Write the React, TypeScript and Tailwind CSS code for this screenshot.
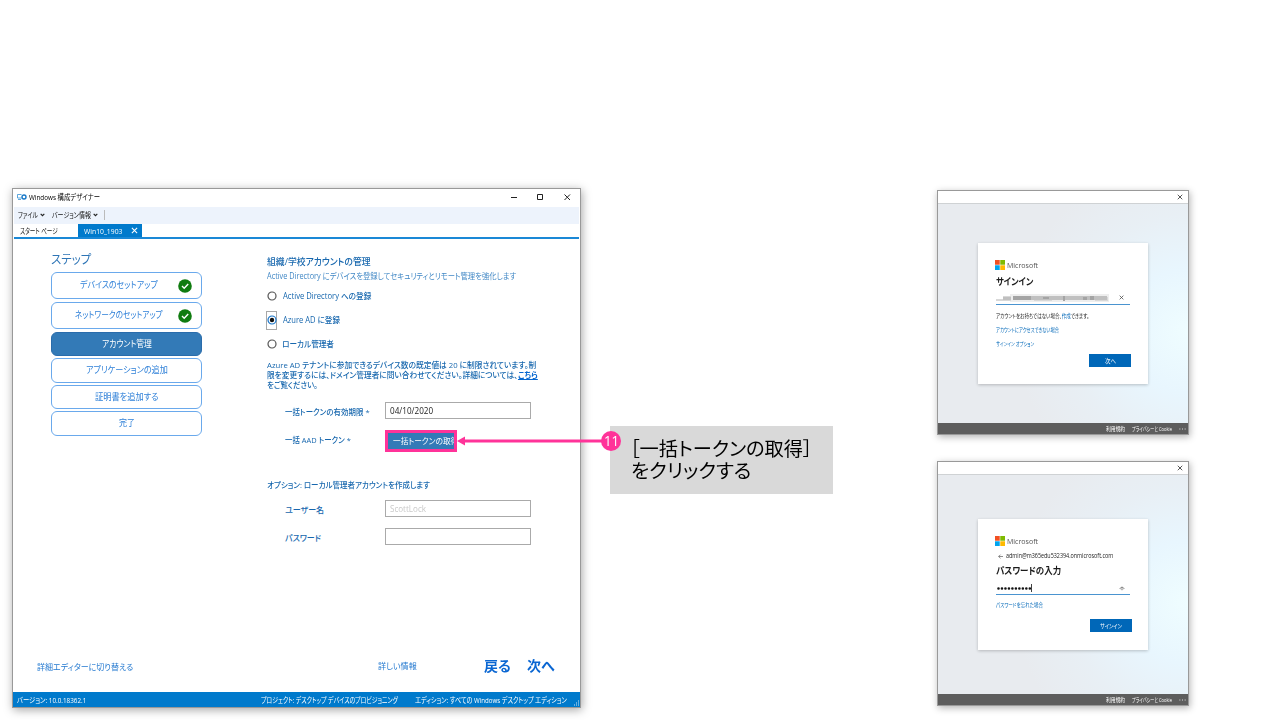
import { useLayoutEffect, useRef, useState } from "react";
import type { ReactNode } from "react";

type FitProps = { w: number; className?: string; children: ReactNode };

/* A single line of text, condensed or widened to a given width. */
function Fit({ w, className = "", children }: FitProps) {
  const ref = useRef<HTMLSpanElement>(null);
  const [scale, setScale] = useState(1);
  useLayoutEffect(() => {
    if (ref.current) setScale(w / ref.current.offsetWidth);
  }, [w]);
  return (
    <span className={`flex shrink-0 items-center ${className}`} style={{ width: w }}>
      <span
        ref={ref}
        className="inline-block shrink-0 origin-left whitespace-nowrap"
        style={{ transform: `scaleX(${scale})` }}
      >
        {children}
      </span>
    </span>
  );
}

function Check() {
  return (
    <svg viewBox="0 0 14 14" className="h-[14px] w-[14px]">
      <circle cx="7" cy="7" r="6.8" fill="#107c10" />
      <path d="M4 7.1 6.2 9.2 10.2 5" fill="none" stroke="#fff" strokeWidth="1.4" />
    </svg>
  );
}

function Cross({ className }: { className: string }) {
  return (
    <svg viewBox="0 0 8 8" className={className}>
      <path d="M1 1 7 7M7 1 1 7" fill="none" stroke="currentColor" strokeWidth="1.2" />
    </svg>
  );
}

function Caret() {
  return (
    <svg viewBox="0 0 6 4" className="h-[4px] w-[5px]">
      <path d="M.8 .6 3 2.8 5.2 .6" fill="none" stroke="#222" strokeWidth="1.4" />
    </svg>
  );
}

type StepProps = { label: string; w: number; size: string; done?: boolean; active?: boolean };

function Step({ label, w, size, done, active }: StepProps) {
  return (
    <div
      className={`flex w-[151px] items-center rounded-[6px] border ${size} ${
        active ? "border-[#2a6cab] bg-[#337ab7] text-white" : "border-[#6aa9ec] bg-white text-[#2f80d8]"
      }`}
    >
      <div className={`flex grow justify-center pb-px ${done ? "pl-[7px]" : ""}`}>
        <Fit w={w} className="text-[9px] leading-[12px]">{label}</Fit>
      </div>
      {done && <div className="pr-[9px]"><Check /></div>}
    </div>
  );
}

function Radio({ checked }: { checked?: boolean }) {
  return (
    <span className={`ml-[-1px] flex h-[19px] w-[11px] shrink-0 items-center justify-center ${checked ? "border border-[#a8a8a8]" : ""}`}>
      <svg viewBox="0 0 10 10" className="h-[10px] w-[10px] shrink-0">
        <circle cx="5" cy="5" r="4" fill="#fff" stroke={checked ? "#1874c8" : "#555"} strokeWidth="1.2" />
        {checked && <circle cx="5" cy="5" r="2.2" fill="#111" />}
      </svg>
    </span>
  );
}

function MsLogo() {
  return (
    <div className="ml-[-1px] flex h-[10px] items-center gap-[2px]">
      <svg viewBox="0 0 19 19" className="h-[10px] w-[10px]">
        <path fill="#f25022" d="M0 0h9v9H0z" />
        <path fill="#7fba00" d="M10 0h9v9h-9z" />
        <path fill="#00a4ef" d="M0 10h9v9H0z" />
        <path fill="#ffb900" d="M10 10h9v9h-9z" />
      </svg>
      <Fit w={31} className="text-[7.500px] leading-[10px] text-[#555]">Microsoft</Fit>
    </div>
  );
}

function Dialog({ top, children }: { top: string; children: ReactNode }) {
  return (
    <section className="flex h-[245px] w-[252px] flex-col border border-[#999] bg-white shadow-[1px_2px_7px_rgba(0,0,0,0.3)]">
      <header className="flex h-[13px] shrink-0 items-center justify-end border-b border-[#cfd2d4] pr-[5px] text-[#444]">
        <Cross className="h-[6px] w-[6px]" />
      </header>
      <div
        className={`flex grow flex-col items-start bg-[#e8ebef] bg-[radial-gradient(circle_at_100%_58%,#effdff_0%,#e8f6fe_22%,rgba(232,240,246,0.8)_42%,rgba(232,235,239,0)_62%)] pl-[40px] ${top}`}
      >
        {children}
      </div>
      <footer className="flex h-[11px] shrink-0 items-center justify-end gap-[7px] bg-[#5d5d5d] pr-[2px] text-[6px] leading-[8px] text-white">
        <Fit w={19}>利用規約</Fit>
        <Fit w={40}>プライバシーと Cookie</Fit>
        <svg viewBox="0 0 8 2" className="h-[2px] w-[7px]">
          <path d="M.5 1h1M3.5 1h1M6.5 1h1" stroke="#fff" strokeWidth="1" />
        </svg>
      </footer>
    </section>
  );
}

function Label({ w, children }: { w: number; children: ReactNode }) {
  return (
    <div className="w-[100px] shrink-0 pt-[2px]">
      <Fit w={w} className="text-[8px] leading-[12px] font-medium">{children}</Fit>
    </div>
  );
}

function DesignerWindow() {
  return (
    <section className="flex h-[520px] w-[569px] flex-col border border-[#999] bg-white shadow-[1px_2px_9px_rgba(0,0,0,0.35)]">
      <header className="flex h-[18px] shrink-0 items-center pr-[9px] pb-[2px] pl-[4px]">
        <svg viewBox="0 0 20 12" className="mr-[2px] h-[6px] w-[10px]">
          <path d="M9 1H1v7h8M2 11h6" fill="none" stroke="#3392d6" strokeWidth="1.6" />
          <circle cx="14" cy="6" r="4" fill="none" stroke="#1979c8" strokeWidth="2.8" />
        </svg>
        <Fit w={71} className="text-[7.5px] leading-[12px] text-black">Windows 構成デザイナー</Fit>
        <svg viewBox="0 0 61 8" className="ml-auto h-[8px] w-[61px]">
          <path d="M1 4.500h6M27.500 1.500h5v5h-5zM54.500 1.500 60 7M60 1.500 54.500 7" fill="none" stroke="#222" strokeWidth="1" />
        </svg>
      </header>
      <nav className="mx-px flex h-[17px] shrink-0 items-center bg-[#edf3fc] pb-px pl-[4px] text-[7.500px] leading-[12px] text-[#111]">
        <Fit w={20}>ファイル</Fit>
        <div className="w-[14px] pl-[2px]"><Caret /></div>
        <Fit w={39}>バージョン情報</Fit>
        <div className="w-[13px] pl-[2px]"><Caret /></div>
        <div className="h-[10px] w-px bg-[#bbb]" />
      </nav>
      <div className="mx-px flex h-[13px] shrink-0 items-stretch pl-[6px] text-[7.500px] leading-[12px]">
        <Fit w={38} className="text-[#222]">スタート ページ</Fit>
        <div className="ml-[20px] flex w-[64px] items-center justify-between bg-[#007acc] pr-[4px] pl-[6px] text-white">
          <Fit w={38}>Win10_1903</Fit>
          <Cross className="h-[7px] w-[7px]" />
        </div>
      </div>
      <div className="mx-px h-[2px] shrink-0 bg-[#1a88d6]" />
      <div className="flex grow">
        <aside className="flex w-[254px] shrink-0 flex-col pt-[13px] pl-[38px]">
          <div className="h-[20px] pt-px">
            <Fit w={40} className="text-[12px] leading-[14px] text-[#2e75b6]">ステップ</Fit>
          </div>
          <div className="flex flex-col gap-[3px]">
            <Step label="デバイスのセットアップ" w={78} size="h-[27px]" done />
            <Step label="ネットワークのセットアップ" w={88} size="h-[27px]" done />
            <Step label="アカウント管理" w={50} size="h-[24px]" active />
          </div>
          <div className="flex flex-col gap-[2px] pt-[2px]">
            <Step label="アプリケーションの追加" w={82} size="h-[25px]" />
            <Step label="証明書を追加する" w={64} size="h-[24px]" />
            <Step label="完了" w={16} size="h-[25px]" />
          </div>
          <div className="mt-auto mb-[18px] ml-[-14px]">
            <Fit w={96} className="text-[8.5px] leading-[14px] text-[#2479d0]">詳細エディターに切り替える</Fit>
          </div>
        </aside>
        <main className="flex w-[300px] flex-col pt-[16px] text-[#1767ae]">
          <Fit w={104} className="text-[9.500px] leading-[14px] font-medium">組織/学校アカウントの管理</Fit>
          <Fit w={249} className="text-[8.500px] leading-[13px] text-[#4389c6]">Active Directory にデバイスを登録してセキュリティとリモート管理を強化します</Fit>
          <div className="flex flex-col text-[8.500px] leading-[12px] font-medium">
            <div className="flex h-[27px] items-center gap-[6px]">
              <Radio /><Fit w={88}>Active Directory への登録</Fit>
            </div>
            <div className="flex h-[22px] items-center gap-[6px]">
              <Radio checked /><Fit w={57}>Azure AD に登録</Fit>
            </div>
            <div className="flex h-[26px] items-center gap-[5px]">
              <Radio /><Fit w={52}>ローカル管理者</Fit>
            </div>
          </div>
          <div className="pt-[3px] text-[8px] leading-[10px] font-medium">
            <Fit w={269}>Azure AD テナントに参加できるデバイス数の既定値は 20 に制限されています。制</Fit>
            <Fit w={271}>限を変更するには、ドメイン管理者に問い合わせてください。詳細については、<span className="font-bold text-[#0667d0] underline">こちら</span></Fit>
            <Fit w={51}>をご覧ください。</Fit>
          </div>
          <div className="mt-[12px] flex h-[17px] items-center pl-[18px]">
            <Label w={85}>一括トークンの有効期限 *</Label>
            <div className="flex h-[17px] w-[146px] items-center border border-[#aaa] pl-[4px]">
              <Fit w={43} className="text-[8.500px] leading-[12px] text-[#222]">04/10/2020</Fit>
            </div>
          </div>
          <div className="mt-[11px] flex h-[22px] items-center pl-[18px]">
            <div className="pb-[4px]"><Label w={66}>一括 AAD トークン *</Label></div>
            <div className="flex h-[22px] w-[72px] items-center overflow-hidden border-[3px] border-[#ff3399] bg-[#337ab7] pl-[5px]">
              <Fit w={65} className="text-[8.500px] leading-[12px] text-white">一括トークンの取得</Fit>
            </div>
          </div>
          <Fit w={163} className="mt-[26px] text-[8px] leading-[13px] font-medium">オプション: ローカル管理者アカウントを作成します</Fit>
          <div className="mt-[9px] flex h-[17px] items-center pl-[18px]">
            <Label w={39}>ユーザー名</Label>
            <div className="flex h-[17px] w-[146px] items-center border border-[#aaa] pl-[4px]">
              <Fit w={36} className="text-[8.500px] leading-[12px] text-[#c9c9c9]">ScottLock</Fit>
            </div>
          </div>
          <div className="mt-[11px] flex h-[17px] items-center pl-[18px]">
            <Label w={36}>パスワード</Label>
            <div className="h-[17px] w-[146px] border border-[#aaa]" />
          </div>
          <div className="mt-auto mb-[17px] flex items-center pl-[111px] text-[#0a66d2]">
            <Fit w={39} className="text-[8.500px] leading-[14px] text-[#2479d0]">詳しい情報</Fit>
            <Fit w={27} className="ml-[67px] text-[13.500px] leading-[18px] font-bold">戻る</Fit>
            <Fit w={28} className="ml-[16px] text-[13.500px] leading-[18px] font-bold">次へ</Fit>
          </div>
        </main>
      </div>
      <footer className="flex h-[15px] shrink-0 items-center bg-[#007acc] pl-[4px] text-[7.500px] leading-[12px] text-white">
        <Fit w={69}>バージョン: 10.0.18362.1</Fit>
        <Fit w={137} className="ml-[175px]">プロジェクト: デスクトップ デバイスのプロビジョニング</Fit>
        <Fit w={152} className="ml-[17px]">エディション: すべての Windows デスクトップ エディション</Fit>
        <svg viewBox="0 0 7 7" className="ml-auto h-[7px] w-[7px] self-end">
          <path d="M5 1h1M3 3h1M5 3h1M1 5h1M3 5h1M5 5h1" stroke="#cfe6f8" strokeWidth="1" />
        </svg>
      </footer>
    </section>
  );
}

export default function App() {
  return (
    <div
      lang="ja"
      className="relative flex h-[720px] w-[1280px] items-start overflow-hidden bg-white pl-[12px] font-['Open_Sans','Noto_Sans_CJK_JP',sans-serif] [font-feature-settings:'palt']"
    >
      <div className="pt-[188px]"><DesignerWindow /></div>

      <div className="mt-[426px] ml-[29px] flex h-[68px] w-[223px] flex-col bg-[#d9d9d9] pt-[12px] text-[19px] leading-[22px] text-black">
        <Fit w={183} className="ml-[20px]">［一括トークンの取得］</Fit>
        <Fit w={120} className="ml-[21px]">をクリックする</Fit>
      </div>

      <div className="ml-[104px] flex flex-col gap-[26px] pt-[190px]">
        <Dialog top="pt-[39px]">
          <div className="flex h-[141px] w-[170px] flex-col bg-white px-[18px] pt-[17px] text-[5.500px] leading-[8px] text-[#0067b8] shadow-[0_1px_3px_rgba(0,0,0,0.22)]">
            <MsLogo />
            <Fit w={37} className="mt-[5px] text-[9.500px] leading-[14px] font-bold text-[#1b1b1b]">サインイン</Fit>
            <div className="mt-[2px] flex h-[13px] w-[134px] items-center justify-between pr-[6px] text-[#444]">
              <svg viewBox="0 0 113 8" className="h-[8px] w-[113px] blur-[0.6px]">
                <path fill="#eeeeee" d="M14 0h99v8H14z" />
                <path fill="#d8d8d8" d="M0 5h7v2H0zM7 2h8v5H7zM38 2h18v5H38zM57 2h10v4H57zM70 2h16v4H70zM99 3h13v4H99z" />
                <path fill="#c0c0c0" d="M7 3h8v3H7zM17 2h94v4H17z" />
                <path fill="#a4a4a4" d="M17 2h18v4H17zM47 3h6v2h-6zM67 2h2v5h-2zM87 3h4v3h-4zM94 2h4v4h-4z" />
              </svg>
              <Cross className="h-[5px] w-[5px]" />
            </div>
            <div className="h-px w-[134px] shrink-0 bg-[#4a94d0]" />
            <Fit w={93} className="mt-[7px]"><span className="text-[#222]">アカウントをお持ちではない場合、</span>作成<span className="text-[#222]">できます。</span></Fit>
            <Fit w={63} className="mt-[6px]">アカウントにアクセスできない場合</Fit>
            <Fit w={38} className="mt-[6px]">サインイン オプション</Fit>
            <div className="mt-[6px] ml-[93px] flex h-[13px] w-[42px] items-center justify-center bg-[#0067b8] text-[6px] text-white">
              <Fit w={11}>次へ</Fit>
            </div>
          </div>
        </Dialog>
        <Dialog top="pt-[44px]">
          <div className="flex h-[131px] w-[170px] flex-col bg-white px-[18px] pt-[17px] text-[5.500px] leading-[8px] text-[#0067b8] shadow-[0_1px_3px_rgba(0,0,0,0.22)]">
            <MsLogo />
            <div className="mt-[6px] flex h-[8px] items-center gap-[3px] pl-[2px] text-[#222]">
              <svg viewBox="0 0 6 6" className="h-[5px] w-[5px]">
                <path d="M6 3H.8M3 .8.8 3 3 5.200" fill="none" stroke="#555" strokeWidth=".8" />
              </svg>
              <Fit w={107} className="text-[6.500px]">admin@m365edu532394.onmicrosoft.com</Fit>
            </div>
            <Fit w={65} className="mt-[4px] text-[9.500px] leading-[14px] font-bold text-[#1b1b1b]">パスワードの入力</Fit>
            <div className="mt-[4px] flex h-[12px] w-[134px] items-center pr-[5px] pl-px">
              <svg viewBox="0 0 36 8" className="h-[8px] w-[36px]">
                <path d="M1.500 4.500H33" fill="none" stroke="#111" strokeWidth="2.600" strokeLinecap="round" strokeDasharray="0 3.480" />
                <path d="M34.500 0V8" stroke="#111" strokeWidth=".8" />
              </svg>
              <svg viewBox="0 0 6 5" className="ml-auto h-[5px] w-[6px]">
                <path d="M.5 2.500Q3 0 5.500 2.500M3 .5V1.500" fill="none" stroke="#777" strokeWidth=".7" />
                <circle cx="3" cy="2.800" r="1.100" fill="none" stroke="#777" strokeWidth=".6" />
              </svg>
            </div>
            <div className="h-px w-[134px] shrink-0 bg-[#4a94d0]" />
            <Fit w={47} className="mt-[6px]">パスワードを忘れた場合</Fit>
            <div className="mt-[10px] ml-[94px] flex h-[13px] w-[42px] items-center justify-center bg-[#0067b8] text-[6px] text-white">
              <Fit w={22}>サインイン</Fit>
            </div>
          </div>
        </Dialog>
      </div>

      <div className="absolute top-[431px] left-[457px] flex items-center">
        <svg viewBox="0 0 146 10" className="mr-[-2px] h-[10px] w-[146px]">
          <path d="M0 5 8 .5V9.500Z" fill="#ff3399" />
          <path d="M6 5H146" stroke="#ff3399" strokeWidth="3" />
        </svg>
        <div className="flex h-[20px] w-[20px] items-center justify-center rounded-full bg-[#ff3399] text-[14px] leading-[20px] text-white">
          <Fit w={15}>11</Fit>
        </div>
      </div>
    </div>
  );
}
